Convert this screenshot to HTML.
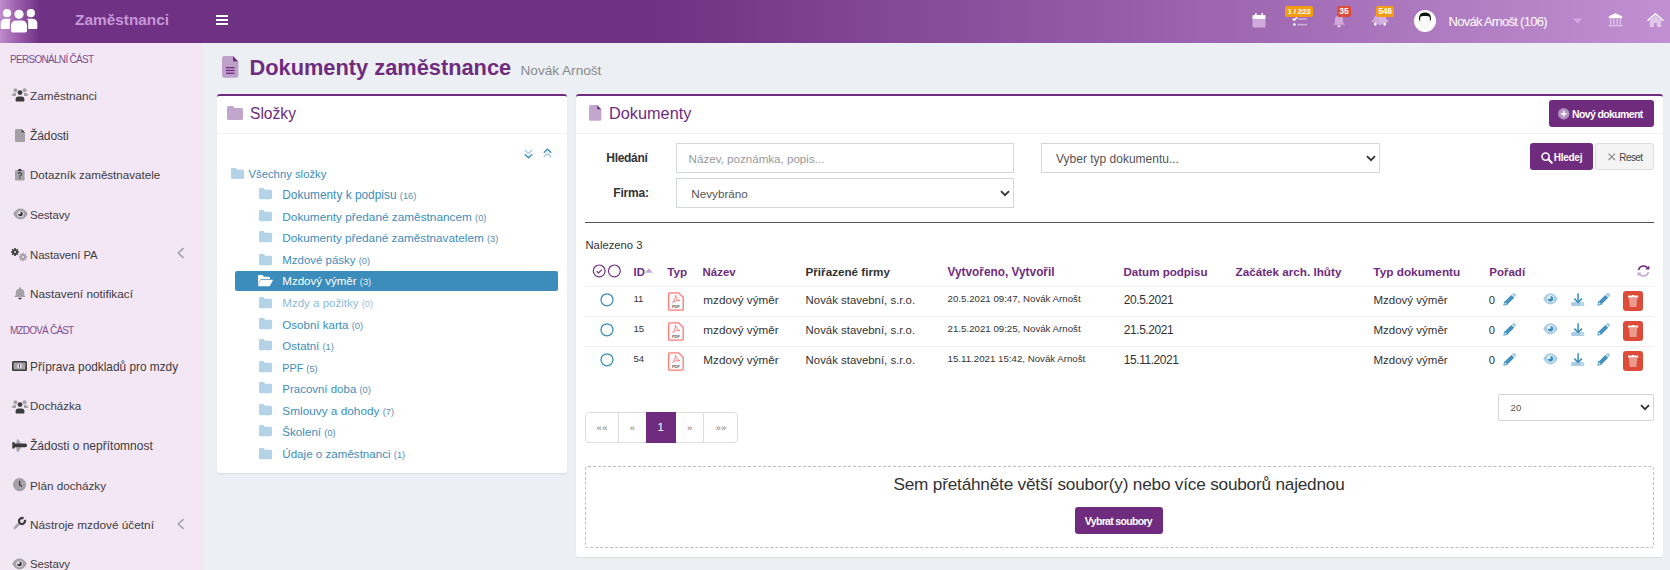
<!DOCTYPE html>
<html><head><meta charset="utf-8">
<style>
*{box-sizing:border-box;margin:0;padding:0}
html,body{width:1670px;height:570px;overflow:hidden}
body{position:relative;background:#ecf0f5;font-family:"Liberation Sans",sans-serif;color:#333}
.a{position:absolute;white-space:nowrap}
.t{position:absolute;white-space:nowrap;line-height:1}
svg{position:absolute;overflow:visible}
#hdr{position:absolute;left:0;top:0;width:1670px;height:43px;background:linear-gradient(to right,#6f3183 0,#6f3183 650px,#c190d2 1670px)}
#logo{position:absolute;left:0;top:0;width:52px;height:43px;background:linear-gradient(to right,#c08dcc 0,#9a5cab 18px,#6f3183 40px)}
#side{position:absolute;left:0;top:43px;width:203px;height:527px;background:#f3e6f5}
.si{color:#3d3d3d;font-size:12px}
.sh{color:#7b4f8c;font-size:10px}
.panel{position:absolute;background:#fff;border-top:2px solid #6f2c7f;border-radius:3px;box-shadow:0 1px 1px rgba(0,0,0,.08)}
.fl{color:#3c8dbc;font-size:12px}
.fc{font-size:10px;color:#5f7f99}
.th{font-weight:bold;color:#6f2c7f;font-size:12px}
.td{color:#333;font-size:12px}
</style></head>
<body>
<div id="hdr"></div>
<div id="logo"></div>
<div id="side"></div>

<!-- header -->
<svg style="left:0;top:9px" width="38" height="24" viewBox="0 0 38 24">
 <g fill="#fff">
  <circle cx="7" cy="4.2" r="4.1"/><circle cx="19" cy="5.3" r="4.6"/><circle cx="30.8" cy="4.2" r="4.1"/>
  <path d="M0.7 14.5a4.8 4.8 0 0 1 4.8-4.8h5.3a5.5 5.5 0 0 0-1 3.2v7.2H1.7a1 1 0 0 1-1-1z"/>
  <path d="M37.3 14.5a4.8 4.8 0 0 0-4.8-4.8h-5.3a5.5 5.5 0 0 1 1 3.2v7.2h8.1a1 1 0 0 0 1-1z"/>
  <path d="M11 16.5a5 5 0 0 1 5-5h6a5 5 0 0 1 5 5v5.2a1.8 1.8 0 0 1-1.8 1.8H12.8A1.8 1.8 0 0 1 11 21.7z"/>
 </g>
</svg>
<div class="t" style="left:75px;top:12px;font-size:15.4px;font-weight:bold;color:#c697d8">Zaměstnanci</div>
<div class="a" style="left:216px;top:15px;width:12px;height:2px;background:#fff"></div>
<div class="a" style="left:216px;top:19px;width:12px;height:2px;background:#fff"></div>
<div class="a" style="left:216px;top:23px;width:12px;height:2px;background:#fff"></div>

<!-- calendar -->
<svg style="left:1252px;top:12px" width="14" height="16" viewBox="0 0 14 16">
 <rect x="0.5" y="7" width="13" height="8.5" rx="1" fill="#cfa9dc"/>
 <path d="M0.5 7V4a1 1 0 0 1 1-1h11a1 1 0 0 1 1 1v3z" fill="#fff"/>
 <rect x="3" y="1" width="1.6" height="3" fill="#fff"/><rect x="9.4" y="1" width="1.6" height="3" fill="#fff"/>
</svg>
<!-- tasks -->
<svg style="left:1292px;top:16px" width="16" height="11" viewBox="0 0 16 11">
 <path d="M0.8 2.6l1.6 1.6L5 1.2" stroke="#fff" stroke-width="1.5" fill="none"/>
 <circle cx="2.4" cy="8.6" r="1.3" fill="#fff"/>
 <rect x="6" y="2.2" width="9" height="1.6" fill="#cfa9dc"/><rect x="5.5" y="7.8" width="9.5" height="1.6" fill="#cfa9dc"/>
</svg>
<div class="a" style="left:1285px;top:6px;width:28px;height:11px;background:#f39c12;border-radius:2px;color:#fff;font-size:8px;font-weight:bold;text-align:center;line-height:11.5px;letter-spacing:-0.2px">1 / 223</div>
<!-- bell -->
<svg style="left:1332px;top:14px" width="14" height="14" viewBox="0 0 14 14">
 <path d="M7 1.5a4 4 0 0 1 4 4v3l2 2.3H1l2-2.3v-3a4 4 0 0 1 4-4z" fill="#cfa9dc"/>
 <path d="M5.3 11.6h3.4a1.7 1.7 0 0 1-3.4 0z" fill="#fff"/>
</svg>
<div class="a" style="left:1337px;top:6px;width:14px;height:11px;background:#dd4b39;border-radius:2px;color:#fff;font-size:8.5px;font-weight:bold;text-align:center;line-height:11.5px">35</div>
<!-- bells -->
<svg style="left:1371px;top:14px" width="18" height="13" viewBox="0 0 18 13">
 <g transform="rotate(22 6 6)"><path d="M6 1.2a3.6 3.6 0 0 1 3.6 3.6v2.6l1.7 2.1H0.7L2.4 7.4V4.8A3.6 3.6 0 0 1 6 1.2z" fill="#cfa9dc"/><circle cx="6" cy="10.6" r="1.4" fill="#fff"/></g>
 <g transform="rotate(-22 12 6)"><path d="M12 1.2a3.6 3.6 0 0 1 3.6 3.6v2.6l1.7 2.1H6.7L8.4 7.4V4.8A3.6 3.6 0 0 1 12 1.2z" fill="#d5b3e0"/><circle cx="12" cy="10.6" r="1.4" fill="#fff"/></g>
</svg>
<div class="a" style="left:1376px;top:6px;width:18px;height:11px;background:#f39c12;border-radius:2px;color:#fff;font-size:8.5px;font-weight:bold;text-align:center;line-height:11.5px;letter-spacing:-0.2px">546</div>
<!-- avatar -->
<svg style="left:1414px;top:10px" width="22" height="22" viewBox="0 0 22 22">
 <circle cx="11" cy="11" r="11" fill="#fff"/>
 <path d="M5.2 10.8C4.6 7 5.2 2.6 11 2.6s6.4 4.4 5.8 8.2l-.9-.2-.2-3.6C15 6.4 13.5 6 11 6S7 6.4 6.3 7l-.2 3.6z" fill="#111"/>
 <path d="M6.2 9.5c0 4.5 2 7.8 4.8 7.8s4.8-3.3 4.8-7.8" stroke="#ddd" stroke-width=".6" fill="none"/>
 <circle cx="8.8" cy="11" r=".6" fill="#ddd"/><circle cx="13.2" cy="11" r=".6" fill="#ddd"/>
</svg>
<div class="t" style="left:1448.5px;top:15px;font-size:13px;color:#fff;letter-spacing:-0.72px">Novák Arnošt (106)</div>
<svg style="left:1573px;top:18px" width="10" height="6" viewBox="0 0 10 6"><path d="M0 0.5h9.5L4.75 5.5z" fill="#d2aade"/></svg>
<!-- bank -->
<svg style="left:1608px;top:13px" width="15" height="14" viewBox="0 0 15 14">
 <path d="M7.5 0.2L14.2 3.3V5.2H0.8V3.3z" fill="#fff"/>
 <g fill="#d9bde3"><rect x="1.9" y="6" width="1.6" height="5.6"/><rect x="4.9" y="6" width="1.6" height="5.6"/><rect x="8.4" y="6" width="1.6" height="5.6"/><rect x="11.5" y="6" width="1.6" height="5.6"/>
 <rect x="0.6" y="11.8" width="13.8" height="1.8" rx=".4"/></g>
</svg>
<!-- home -->
<svg style="left:1647px;top:13px" width="17" height="15" viewBox="0 0 17 15">
 <path d="M1 7.2L8.5 0.8 16 7.2" stroke="#fff" stroke-width="1.5" fill="none" stroke-linecap="round" stroke-linejoin="round"/>
 <path d="M2.8 7.3L8.5 2.5l5.7 4.8V14H10V10H7v4H2.8z" fill="#e0c6e8"/>
</svg>

<!-- sidebar -->
<div class="t sh" style="left:10px;top:55px;font-size:10px;letter-spacing:-0.7px">PERSONÁLNÍ ČÁST</div>
<div class="t sh" style="left:10px;top:326px;font-size:10px;letter-spacing:-0.8px">MZDOVÁ ČÁST</div>
<div class="t si" style="left:30px;top:89.9px;font-size:11.7px">Zaměstnanci</div>
<div class="t si" style="left:30px;top:129.5px;letter-spacing:-0.1px">Žádosti</div>
<div class="t si" style="left:30px;top:169.2px;font-size:11.6px">Dotazník zaměstnavatele</div>
<div class="t si" style="left:30px;top:209.9px;font-size:11.4px;letter-spacing:-0.1px">Sestavy</div>
<div class="t si" style="left:30px;top:250.1px;font-size:11.4px;letter-spacing:-0.1px">Nastavení PA</div>
<div class="t si" style="left:30px;top:289.3px;font-size:11.8px">Nastavení notifikací</div>
<div class="t si" style="left:30px;top:362.1px;font-size:11.85px">Příprava podkladů pro mzdy</div>
<div class="t si" style="left:30px;top:401.4px;font-size:11.5px">Docházka</div>
<div class="t si" style="left:30px;top:440.3px;font-size:12px">Žádosti o nepřítomnost</div>
<div class="t si" style="left:30px;top:479.9px;font-size:11.7px">Plán docházky</div>
<div class="t si" style="left:30px;top:519.5px;font-size:11.8px">Nástroje mzdové účetní</div>
<div class="t si" style="left:30px;top:559.1px;font-size:11.4px;letter-spacing:-0.1px">Sestavy</div>
<svg style="left:177px;top:248px" width="7" height="10" viewBox="0 0 7 10"><path d="M6 0.6L1.2 5 6 9.4" stroke="#a9a0ad" stroke-width="1.6" fill="none" stroke-linecap="round" stroke-linejoin="round"/></svg>
<svg style="left:177px;top:519px" width="7" height="10" viewBox="0 0 7 10"><path d="M6 0.6L1.2 5 6 9.4" stroke="#a9a0ad" stroke-width="1.6" fill="none" stroke-linecap="round" stroke-linejoin="round"/></svg>
<!-- sidebar icons -->
<svg style="left:11.5px;top:88px" width="16" height="14" viewBox="0 0 16 14">
 <g fill="#a5a1a8"><circle cx="3.4" cy="2.2" r="2"/><circle cx="12.6" cy="2.2" r="2"/><path d="M0 7.5a2.5 2.5 0 0 1 2.5-2.5h2a3 3 0 0 0-.5 2v1H0z"/><path d="M16 7.5a2.5 2.5 0 0 0-2.5-2.5h-2a3 3 0 0 1 .5 2v1h4z"/></g>
 <g fill="#3b3b3b"><circle cx="8" cy="4.6" r="2.4"/><path d="M3.6 11.5a3 3 0 0 1 3-3h2.8a3 3 0 0 1 3 3v1.2a.8.8 0 0 1-.8.8H4.4a.8.8 0 0 1-.8-.8z"/></g>
</svg>
<svg style="left:14.8px;top:128.6px" width="10" height="13" viewBox="0 0 10 13">
 <path d="M1.2 0H6.5V3.5H10V11.8a1.2 1.2 0 0 1-1.2 1.2H1.2A1.2 1.2 0 0 1 0 11.8V1.2A1.2 1.2 0 0 1 1.2 0z" fill="#a5a1a8"/>
 <path d="M6.5 0L10 3.5H6.5z" fill="#3b3b3b"/>
</svg>
<svg style="left:14.8px;top:168px" width="10" height="13" viewBox="0 0 10 13">
 <rect x="0" y="2" width="9.6" height="10.4" rx="1.2" fill="#a5a1a8"/>
 <path d="M3 2.6a1.8 1.8 0 0 1 3.6 0V3H3z" fill="#3b3b3b"/>
 <path d="M3.4 6a1.5 1.5 0 1 1 2 1.4l-.6.5v.8" stroke="#3b3b3b" stroke-width="1.1" fill="none"/><circle cx="4.8" cy="10.3" r=".7" fill="#3b3b3b"/>
</svg>
<svg style="left:12.5px;top:208px" width="15" height="12" viewBox="0 0 15 12">
 <path d="M0.3 6C2 2.5 4.5 0.6 7.5 0.6S13 2.5 14.7 6C13 9.5 10.5 11.4 7.5 11.4S2 9.5 0.3 6z" fill="#a5a1a8"/>
 <circle cx="7.5" cy="6" r="3.2" fill="#f3e6f5"/><circle cx="7.5" cy="6" r="2.4" fill="#3b3b3b"/><path d="M7.5 3.6a2.4 2.4 0 0 0-2.4 2.4h2.4z" fill="#f3e6f5"/>
</svg>
<svg style="left:11px;top:247.5px" width="17" height="14" viewBox="0 0 17 14">
 <g transform="translate(4 4)"><circle r="2.6" fill="#3b3b3b"/><circle r="1" fill="#f3e6f5"/><g stroke="#3b3b3b" stroke-width="1.6"><path d="M0-4V4M-4 0H4M-2.8-2.8L2.8 2.8M-2.8 2.8L2.8-2.8"/></g><circle r="1" fill="#f3e6f5"/></g>
 <g transform="translate(12 9)"><circle r="2.8" fill="#a5a1a8"/><g stroke="#a5a1a8" stroke-width="1.6"><path d="M0-4.2V4.2M-4.2 0H4.2M-3-3L3 3M-3 3L3-3"/></g><circle r="1.1" fill="#f3e6f5"/></g>
</svg>
<svg style="left:13.5px;top:287px" width="12" height="13" viewBox="0 0 12 13">
 <path d="M6 0.3a1 1 0 0 1 1 1v.4a4 4 0 0 1 3.2 3.9v2.5L11.8 10H0.2L1.8 8.1V5.6A4 4 0 0 1 5 1.7v-.4a1 1 0 0 1 1-1z" fill="#a5a1a8"/>
 <path d="M4.3 10.8h3.4a1.7 1.7 0 0 1-3.4 0z" fill="#3b3b3b"/>
</svg>
<svg style="left:12px;top:361px" width="15" height="10" viewBox="0 0 15 10">
 <rect x="0" y="0" width="15" height="10" rx="1.5" fill="#3b3b3b"/><rect x="1.6" y="1.6" width="11.8" height="6.8" rx=".5" fill="#a5a1a8"/>
 <circle cx="7.5" cy="5" r="2.3" fill="#f3e6f5"/><rect x="7" y="3.5" width="1" height="3" fill="#3b3b3b"/>
</svg>
<svg style="left:11.5px;top:399.5px" width="16" height="14" viewBox="0 0 16 14">
 <g fill="#a5a1a8"><circle cx="3.4" cy="2.2" r="2"/><circle cx="12.6" cy="2.2" r="2"/><path d="M0 7.5a2.5 2.5 0 0 1 2.5-2.5h2a3 3 0 0 0-.5 2v1H0z"/><path d="M16 7.5a2.5 2.5 0 0 0-2.5-2.5h-2a3 3 0 0 1 .5 2v1h4z"/></g>
 <g fill="#3b3b3b"><circle cx="8" cy="4.6" r="2.4"/><path d="M3.6 11.5a3 3 0 0 1 3-3h2.8a3 3 0 0 1 3 3v1.2a.8.8 0 0 1-.8.8H4.4a.8.8 0 0 1-.8-.8z"/></g>
</svg>
<svg style="left:11.8px;top:438.5px" width="16" height="14" viewBox="0 0 16 14">
 <path d="M4.2 4.8L5 0.4Q5.6 0 6.3 0.4L9.4 4.8z M4.2 8.2L5 12.8Q5.6 13.2 6.3 12.8L9.4 8.2z" fill="#a5a1a8"/>
 <path d="M0.3 3.3H2.7V4.6H13.2Q15.1 4.6 15.1 6.4Q15.1 8.2 13.2 8.2H2.7V9.6H0.3z" fill="#3b3b3b"/>
</svg>
<svg style="left:12.9px;top:478.4px" width="14" height="14" viewBox="0 0 14 14">
 <circle cx="6.6" cy="6.6" r="6.6" fill="#a5a1a8"/><path d="M6.6 2.8v4l2.5 1.6" stroke="#3b3b3b" stroke-width="1.2" fill="none"/>
</svg>
<svg style="left:12.9px;top:517.4px" width="14" height="14" viewBox="0 0 14 14">
 <path d="M1.6 11.2L6.2 6.6" stroke="#a5a1a8" stroke-width="2.6" stroke-linecap="round"/><circle cx="1.7" cy="11.1" r=".55" fill="#f3e6f5"/>
 <circle cx="9" cy="4" r="3" stroke="#3b3b3b" stroke-width="2.3" fill="none" stroke-dasharray="16.4 2.45" transform="rotate(-22 9 4)"/>
</svg>
<svg style="left:12.4px;top:558.3px" width="15" height="12" viewBox="0 0 15 12">
 <path d="M0.3 6C2 2.5 4.5 0.6 7.5 0.6S13 2.5 14.7 6C13 9.5 10.5 11.4 7.5 11.4S2 9.5 0.3 6z" fill="#a5a1a8"/>
 <circle cx="7.5" cy="6" r="3.2" fill="#f3e6f5"/><circle cx="7.5" cy="6" r="2.4" fill="#3b3b3b"/><path d="M7.5 3.6a2.4 2.4 0 0 0-2.4 2.4h2.4z" fill="#f3e6f5"/>
</svg>

<!-- title -->
<svg style="left:222px;top:55.8px" width="17" height="22" viewBox="0 0 17 22">
 <path d="M2.2 0H11V5.5H16.4V19.6A2.2 2.2 0 0 1 14.2 21.8H2.2A2.2 2.2 0 0 1 0 19.6V2.2A2.2 2.2 0 0 1 2.2 0z" fill="#bfa0c8"/>
 <path d="M11 0L16.4 5.5H11z" fill="#6f2c7f"/>
 <g fill="#6f2c7f"><rect x="4" y="11" width="8.5" height="1.3"/><rect x="4" y="13.8" width="8.5" height="1.3"/><rect x="4" y="16.6" width="8.5" height="1.3"/></g>
</svg>
<div class="t" style="left:249.5px;top:56.5px;font-size:21.8px;font-weight:bold;color:#6f2c7f">Dokumenty zaměstnance</div>
<div class="t" style="left:520.5px;top:63.5px;font-size:13.6px;color:#8a8a8a">Novák Arnošt</div>

<!-- panels -->
<div class="panel" style="left:217px;top:94px;width:350px;height:379px"></div>
<div class="panel" style="left:576px;top:94px;width:1087px;height:463px"></div>
<div class="a" style="left:217px;top:133px;width:350px;height:1px;background:#f2f2f2"></div>
<div class="a" style="left:576px;top:133px;width:1087px;height:1px;background:#f2f2f2"></div>

<!-- slozky header -->
<svg style="left:227.3px;top:105.8px" width="16" height="14" viewBox="0 0 16 14"><path d="M1.5 0H6L7.8 2H14.5A1.5 1.5 0 0 1 16 3.5V12.4A1.5 1.5 0 0 1 14.5 13.9H1.5A1.5 1.5 0 0 1 0 12.4V1.5A1.5 1.5 0 0 1 1.5 0z" fill="#c3a6cb"/></svg>
<div class="t" style="left:250px;top:105.6px;font-size:15.6px;color:#6f2c7f">Složky</div>
<svg style="left:524px;top:148.5px" width="9" height="10" viewBox="0 0 9 10"><path d="M0.8 1L4.5 4.6 8.2 1" stroke="#a9cde3" stroke-width="1.4" fill="none"/><path d="M0.8 5.2L4.5 8.8 8.2 5.2" stroke="#3c8dbc" stroke-width="1.4" fill="none"/></svg>
<svg style="left:543px;top:148px" width="9" height="10" viewBox="0 0 9 10"><path d="M0.8 4.8L4.5 1.2 8.2 4.8" stroke="#3c8dbc" stroke-width="1.4" fill="none"/><path d="M0.8 9L4.5 5.4 8.2 9" stroke="#a9cde3" stroke-width="1.4" fill="none"/></svg>
<!-- tree -->
<svg style="left:231.3px;top:167.8px" width="13" height="11" viewBox="0 0 13 11"><path d="M1.2 0H4.6L6 1.6H11.8A1.2 1.2 0 0 1 13 2.8V9.8A1.2 1.2 0 0 1 11.8 11H1.2A1.2 1.2 0 0 1 0 9.8V1.2A1.2 1.2 0 0 1 1.2 0z" fill="#b5d3e7"/></svg>
<div class="t fl" style="left:248.5px;top:169px;font-size:11.3px">Všechny složky</div>
<div class="a" style="left:234.7px;top:271.2px;width:323.5px;height:20.3px;background:#3c8dbc;border-radius:2px"></div>
<svg style="left:258.7px;top:187.9px" width="13" height="11.3" viewBox="0 0 13 11" preserveAspectRatio="none"><path d="M1.2 0H4.6L6 1.6H11.8A1.2 1.2 0 0 1 13 2.8V9.8A1.2 1.2 0 0 1 11.8 11H1.2A1.2 1.2 0 0 1 0 9.8V1.2A1.2 1.2 0 0 1 1.2 0z" fill="#b5d3e7"/></svg>
<div class="t fl" style="left:282.3px;top:190.04px;font-size:11.88px;">Dokumenty k podpisu <span style="font-size:9.3px;color:#5a8bb0">(16)</span></div>
<svg style="left:258.7px;top:210.0px" width="13" height="11.3" viewBox="0 0 13 11" preserveAspectRatio="none"><path d="M1.2 0H4.6L6 1.6H11.8A1.2 1.2 0 0 1 13 2.8V9.8A1.2 1.2 0 0 1 11.8 11H1.2A1.2 1.2 0 0 1 0 9.8V1.2A1.2 1.2 0 0 1 1.2 0z" fill="#b5d3e7"/></svg>
<div class="t fl" style="left:282.3px;top:212.01px;font-size:11.8px;">Dokumenty předané zaměstnancem <span style="font-size:9.3px;color:#5a8bb0">(0)</span></div>
<svg style="left:258.7px;top:231.0px" width="13" height="11.3" viewBox="0 0 13 11" preserveAspectRatio="none"><path d="M1.2 0H4.6L6 1.6H11.8A1.2 1.2 0 0 1 13 2.8V9.8A1.2 1.2 0 0 1 11.8 11H1.2A1.2 1.2 0 0 1 0 9.8V1.2A1.2 1.2 0 0 1 1.2 0z" fill="#b5d3e7"/></svg>
<div class="t fl" style="left:282.3px;top:231.54px;font-size:11.77px;">Dokumenty předané zaměstnavatelem <span style="font-size:9.3px;color:#5a8bb0">(3)</span></div>
<svg style="left:258.7px;top:253.7px" width="13" height="11.3" viewBox="0 0 13 11" preserveAspectRatio="none"><path d="M1.2 0H4.6L6 1.6H11.8A1.2 1.2 0 0 1 13 2.8V9.8A1.2 1.2 0 0 1 11.8 11H1.2A1.2 1.2 0 0 1 0 9.8V1.2A1.2 1.2 0 0 1 1.2 0z" fill="#b5d3e7"/></svg>
<div class="t fl" style="left:282.3px;top:255.0px;font-size:11.46px;">Mzdové pásky <span style="font-size:9.3px;color:#5a8bb0">(0)</span></div>
<svg style="left:258px;top:274.5px" width="15" height="11.3" viewBox="0 0 15 11" preserveAspectRatio="none"><path d="M0 9.8V1.2A1.2 1.2 0 0 1 1.2 0H4.6L6 1.6H10.8A1.2 1.2 0 0 1 12 2.8V4H3.6A1.4 1.4 0 0 0 2.3 4.8z" fill="#fff"/><path d="M2.6 5.2A1 1 0 0 1 3.5 4.6H14.2A.6.6 0 0 1 14.7 5.5L12 10.4A1 1 0 0 1 11.1 11H0.6A.5.5 0 0 1 .2 10.3z" fill="#fff"/></svg>
<div class="t fl" style="left:282.3px;top:276.23px;font-size:11.54px;color:#fff;">Mzdový výměr <span style="font-size:9.3px;color:#e6f0f7">(3)</span></div>
<svg style="left:258.7px;top:296.7px" width="13" height="11.3" viewBox="0 0 13 11" preserveAspectRatio="none"><path d="M1.2 0H4.6L6 1.6H11.8A1.2 1.2 0 0 1 13 2.8V9.8A1.2 1.2 0 0 1 11.8 11H1.2A1.2 1.2 0 0 1 0 9.8V1.2A1.2 1.2 0 0 1 1.2 0z" fill="#b5d3e7"/></svg>
<div class="t fl" style="left:282.3px;top:298.43px;font-size:11.54px;color:#8dbad8;">Mzdy a požitky <span style="font-size:9.3px;color:#9bbdd6">(0)</span></div>
<svg style="left:258.7px;top:318.0px" width="13" height="11.3" viewBox="0 0 13 11" preserveAspectRatio="none"><path d="M1.2 0H4.6L6 1.6H11.8A1.2 1.2 0 0 1 13 2.8V9.8A1.2 1.2 0 0 1 11.8 11H1.2A1.2 1.2 0 0 1 0 9.8V1.2A1.2 1.2 0 0 1 1.2 0z" fill="#b5d3e7"/></svg>
<div class="t fl" style="left:282.3px;top:319.71px;font-size:11.57px;">Osobní karta <span style="font-size:9.3px;color:#5a8bb0">(0)</span></div>
<svg style="left:258.7px;top:339.2px" width="13" height="11.3" viewBox="0 0 13 11" preserveAspectRatio="none"><path d="M1.2 0H4.6L6 1.6H11.8A1.2 1.2 0 0 1 13 2.8V9.8A1.2 1.2 0 0 1 11.8 11H1.2A1.2 1.2 0 0 1 0 9.8V1.2A1.2 1.2 0 0 1 1.2 0z" fill="#b5d3e7"/></svg>
<div class="t fl" style="left:282.3px;top:341.49px;font-size:11.47px;">Ostatní <span style="font-size:9.3px;color:#5a8bb0">(1)</span></div>
<svg style="left:258.7px;top:361.1px" width="13" height="11.3" viewBox="0 0 13 11" preserveAspectRatio="none"><path d="M1.2 0H4.6L6 1.6H11.8A1.2 1.2 0 0 1 13 2.8V9.8A1.2 1.2 0 0 1 11.8 11H1.2A1.2 1.2 0 0 1 0 9.8V1.2A1.2 1.2 0 0 1 1.2 0z" fill="#b5d3e7"/></svg>
<div class="t fl" style="left:282.3px;top:362.56px;font-size:10.8px;">PPF <span style="font-size:9.3px;color:#5a8bb0">(5)</span></div>
<svg style="left:258.7px;top:382.1px" width="13" height="11.3" viewBox="0 0 13 11" preserveAspectRatio="none"><path d="M1.2 0H4.6L6 1.6H11.8A1.2 1.2 0 0 1 13 2.8V9.8A1.2 1.2 0 0 1 11.8 11H1.2A1.2 1.2 0 0 1 0 9.8V1.2A1.2 1.2 0 0 1 1.2 0z" fill="#b5d3e7"/></svg>
<div class="t fl" style="left:282.3px;top:384.38px;font-size:11.48px;">Pracovní doba <span style="font-size:9.3px;color:#5a8bb0">(0)</span></div>
<svg style="left:258.7px;top:404.3px" width="13" height="11.3" viewBox="0 0 13 11" preserveAspectRatio="none"><path d="M1.2 0H4.6L6 1.6H11.8A1.2 1.2 0 0 1 13 2.8V9.8A1.2 1.2 0 0 1 11.8 11H1.2A1.2 1.2 0 0 1 0 9.8V1.2A1.2 1.2 0 0 1 1.2 0z" fill="#b5d3e7"/></svg>
<div class="t fl" style="left:282.3px;top:405.79px;font-size:11.82px;">Smlouvy a dohody <span style="font-size:9.3px;color:#5a8bb0">(7)</span></div>
<svg style="left:258.7px;top:424.6px" width="13" height="11.3" viewBox="0 0 13 11" preserveAspectRatio="none"><path d="M1.2 0H4.6L6 1.6H11.8A1.2 1.2 0 0 1 13 2.8V9.8A1.2 1.2 0 0 1 11.8 11H1.2A1.2 1.2 0 0 1 0 9.8V1.2A1.2 1.2 0 0 1 1.2 0z" fill="#b5d3e7"/></svg>
<div class="t fl" style="left:282.3px;top:425.75px;font-size:11.64px;">Školení <span style="font-size:9.3px;color:#5a8bb0">(0)</span></div>
<svg style="left:258.7px;top:447.5px" width="13" height="11.3" viewBox="0 0 13 11" preserveAspectRatio="none"><path d="M1.2 0H4.6L6 1.6H11.8A1.2 1.2 0 0 1 13 2.8V9.8A1.2 1.2 0 0 1 11.8 11H1.2A1.2 1.2 0 0 1 0 9.8V1.2A1.2 1.2 0 0 1 1.2 0z" fill="#b5d3e7"/></svg>
<div class="t fl" style="left:282.3px;top:448.18px;font-size:11.6px;">Údaje o zaměstnanci <span style="font-size:9.3px;color:#5a8bb0">(1)</span></div>
<!-- docs header -->
<svg style="left:588.8px;top:105px" width="13" height="16" viewBox="0 0 13 16"><path d="M1.6 0H8.2V4.6H12.4V14.2A1.6 1.6 0 0 1 10.8 15.8H1.6A1.6 1.6 0 0 1 0 14.2V1.6A1.6 1.6 0 0 1 1.6 0z" fill="#c3a6cb"/><path d="M8.2 0L12.4 4.6H8.2z" fill="#6f2c7f"/></svg>
<div class="t" style="left:609px;top:105.1px;font-size:16.3px;color:#6f2c7f">Dokumenty</div>
<div class="a" style="left:1549px;top:100px;width:105px;height:27px;background:#6f2c7f;border-radius:3px"></div>
<svg style="left:1558.3px;top:107.8px" width="12" height="12" viewBox="0 0 12 12"><circle cx="5.7" cy="5.7" r="5.7" fill="#b48fc1"/><path d="M5.7 2.8v5.8M2.8 5.7h5.8" stroke="#fff" stroke-width="1.6"/></svg>
<div class="t" style="left:1572px;top:109.4px;font-size:10.5px;font-weight:bold;color:#fff;letter-spacing:-0.62px">Nový dokument</div>

<!-- filters -->
<div class="t" style="left:606.3px;top:151.8px;font-size:12px;font-weight:bold;color:#333;letter-spacing:-0.3px">Hledání</div>
<div class="t" style="left:613.3px;top:186.8px;font-size:12px;font-weight:bold;color:#333;letter-spacing:-0.2px">Firma:</div>
<div class="a" style="left:676px;top:143px;width:338px;height:30px;border:1px solid #d2d6de;background:#fff"></div>
<div class="t" style="left:688.6px;top:152.6px;font-size:11.6px;color:#999">Název, poznámka, popis...</div>
<div class="a" style="left:676px;top:178px;width:338px;height:30px;border:1px solid #d2d6de;background:#fff"></div>
<div class="t" style="left:691.3px;top:187.7px;font-size:11.7px;color:#555">Nevybráno</div>
<svg style="left:1000px;top:190px" width="10" height="7" viewBox="0 0 10 7"><path d="M1 1.2L5 5.2 9 1.2" stroke="#333" stroke-width="1.8" fill="none"/></svg>
<div class="a" style="left:1040.7px;top:143px;width:339px;height:29.5px;border:1px solid #d2d6de;background:#fff"></div>
<div class="t" style="left:1056px;top:152.8px;font-size:12px;color:#555">Vyber typ dokumentu...</div>
<svg style="left:1366px;top:154.5px" width="10" height="7" viewBox="0 0 10 7"><path d="M1 1.2L5 5.2 9 1.2" stroke="#333" stroke-width="1.8" fill="none"/></svg>
<div class="a" style="left:1530px;top:143px;width:62.6px;height:26.6px;background:#6f2c7f;border-radius:3px"></div>
<svg style="left:1541.3px;top:151.5px" width="12" height="12" viewBox="0 0 12 12"><circle cx="4.6" cy="4.6" r="3.6" stroke="#fff" stroke-width="1.6" fill="none"/><path d="M7.3 7.3L10.8 10.8" stroke="#fff" stroke-width="2" stroke-linecap="round"/></svg>
<div class="t" style="left:1553.7px;top:152.6px;font-size:10px;font-weight:bold;color:#fff;letter-spacing:-0.25px">Hledej</div>
<div class="a" style="left:1595px;top:143px;width:58.7px;height:26.6px;background:#f4f4f4;border:1px solid #ddd;border-radius:3px"></div>
<svg style="left:1608.3px;top:152.5px" width="8" height="8" viewBox="0 0 8 8"><path d="M0.6 0.6L7 7M7 0.6L0.6 7" stroke="#888" stroke-width="1.1"/></svg>
<div class="t" style="left:1619.3px;top:152.6px;font-size:10px;color:#444;letter-spacing:-0.6px">Reset</div>
<div class="a" style="left:585px;top:222px;width:1069px;height:1px;background:#555"></div>
<div class="t" style="left:585.5px;top:239.5px;font-size:11.25px;color:#333">Nalezeno 3</div>

<!-- table header -->
<svg style="left:592px;top:264px" width="30" height="14" viewBox="0 0 30 14"><circle cx="7.2" cy="6.9" r="5.9" stroke="#6f2c7f" stroke-width="1.2" fill="none"/><path d="M4.6 7.3l1.9 1.7 3.3-3.4" stroke="#6f2c7f" stroke-width="1.2" fill="none"/><circle cx="22.4" cy="6.9" r="5.9" stroke="#6f2c7f" stroke-width="1.2" fill="none"/></svg>
<div class="t" style="left:633.5px;top:267.23px;font-size:11.3px;font-weight:bold;color:#6f2c7f">ID</div>
<div class="t" style="left:667.3px;top:266.1px;font-size:11.7px;font-weight:bold;color:#6f2c7f">Typ</div>
<div class="t" style="left:702.6px;top:267.11px;font-size:11.45px;font-weight:bold;color:#6f2c7f">Název</div>
<div class="t" style="left:805.5px;top:266.1px;font-size:11.7px;font-weight:bold;color:#333">Přiřazené firmy</div>
<div class="t" style="left:947.5px;top:266.77px;font-size:11.85px;font-weight:bold;color:#6f2c7f">Vytvořeno, Vytvořil</div>
<div class="t" style="left:1123.5px;top:267.02px;font-size:11.55px;font-weight:bold;color:#6f2c7f">Datum podpisu</div>
<div class="t" style="left:1235.5px;top:266.1px;font-size:11.7px;font-weight:bold;color:#6f2c7f">Začátek arch. lhůty</div>
<div class="t" style="left:1373.3px;top:266.81px;font-size:11.8px;font-weight:bold;color:#6f2c7f">Typ dokumentu</div>
<div class="t" style="left:1489.3px;top:267.07px;font-size:11.5px;font-weight:bold;color:#6f2c7f">Pořadí</div>
<svg style="left:645.3px;top:267.8px" width="8" height="5" viewBox="0 0 8 5"><path d="M0 4.8L3.9 0.2 7.8 4.8z" fill="#c3a6cb"/></svg>
<svg style="left:1636.5px;top:265px" width="13" height="12" viewBox="0 0 13 12"><path d="M1.6 5.2A5 5 0 0 1 10.6 3" stroke="#6f2c7f" stroke-width="1.5" fill="none"/><path d="M12.4 0.4V4.4H8.4z" fill="#6f2c7f"/><path d="M11.4 6.8A5 5 0 0 1 2.4 9" stroke="#c3a6cb" stroke-width="1.5" fill="none"/><path d="M0.6 11.6V7.6H4.6z" fill="#c3a6cb"/></svg>
<div class="a" style="left:585px;top:286px;width:1069px;height:1px;background:#f0f0f0"></div>
<div class="a" style="left:585px;top:316px;width:1069px;height:1px;background:#f0f0f0"></div>
<div class="a" style="left:585px;top:346px;width:1069px;height:1px;background:#f0f0f0"></div>
<svg style="left:600px;top:292.5px" width="14" height="14" viewBox="0 0 14 14"><circle cx="7" cy="6.8" r="6" stroke="#3c8dbc" stroke-width="1.3" fill="none"/></svg>
<div class="t" style="left:633.5px;top:294.07px;font-size:9.6px;color:#333">11</div>
<svg style="left:668px;top:291.8px" width="16" height="19" viewBox="0 0 16 19"><path d="M1.8 0.8H10.6L15.2 5.2V16.9A1.3 1.3 0 0 1 13.9 18.2H1.8A1.2 1.2 0 0 1 0.6 17V2A1.2 1.2 0 0 1 1.8 0.8z" fill="#f7fbfd" stroke="#ff7a72" stroke-width="1.3"/><path d="M7.6 3.4C7.4 5.6 6.6 8.6 4.4 10.9M7.6 3.4C8 5.8 9.6 8 11.8 8.6C10.2 8.4 7.6 8.6 6.2 9.6" stroke="#ff6a60" stroke-width=".8" fill="none"/><text x="7.8" y="15.6" font-size="4.2" font-family="Liberation Sans" fill="#666" text-anchor="middle" font-weight="bold" letter-spacing="-.3">PDF</text></svg>
<div class="t td" style="left:703.3px;top:294.1px;font-size:11.7px">mzdový výměr</div>
<div class="t td" style="left:805.6px;top:294.95px;font-size:11.4px">Novák stavební, s.r.o.</div>
<div class="t td" style="left:947.6px;top:293.59px;font-size:9.7px">20.5.2021 09:47, Novák Arnošt</div>
<div class="t td" style="left:1123.8px;top:294.34px;font-size:12px;letter-spacing:-0.45px">20.5.2021</div>
<div class="t td" style="left:1373.5px;top:294.97px;font-size:11.5px">Mzdový výměr</div>
<div class="t td" style="left:1488.8px;top:294.52px;font-size:11.2px">0</div>
<svg style="left:1502.6px;top:293.2px" width="14" height="13" viewBox="0 0 14 13"><g transform="translate(0.8 12.2) rotate(-45) scale(0.93)"><path d="M0 0L3.6-2.1V2.1z" fill="#fff" stroke="#3c8dbc" stroke-width=".9" stroke-linejoin="round"/><rect x="3.6" y="-2.1" width="10" height="4.2" fill="#3c8dbc"/><path d="M5 0H12.5" stroke="#7fb6d8" stroke-width=".6" stroke-dasharray="1 .8"/><path d="M14.2-2.1H16.2A1.3 1.3 0 0 1 17.5-0.8V0.8A1.3 1.3 0 0 1 16.2 2.1H14.2z" fill="#a8cde4"/></g></svg>
<svg style="left:1597.2px;top:293.2px" width="14" height="13" viewBox="0 0 14 13"><g transform="translate(0.8 12.2) rotate(-45) scale(0.93)"><path d="M0 0L3.6-2.1V2.1z" fill="#fff" stroke="#3c8dbc" stroke-width=".9" stroke-linejoin="round"/><rect x="3.6" y="-2.1" width="10" height="4.2" fill="#3c8dbc"/><path d="M5 0H12.5" stroke="#7fb6d8" stroke-width=".6" stroke-dasharray="1 .8"/><path d="M14.2-2.1H16.2A1.3 1.3 0 0 1 17.5-0.8V0.8A1.3 1.3 0 0 1 16.2 2.1H14.2z" fill="#a8cde4"/></g></svg>
<svg style="left:1543.3px;top:293.3px" width="15" height="12" viewBox="0 0 15 12"><path d="M0.3 5.8C2 2.3 4.5 0.2 7.5 0.2S13 2.3 14.7 5.8C13 9.3 10.5 11.4 7.5 11.4S2 9.3 0.3 5.8z" fill="#a8cde4"/><circle cx="7.5" cy="5.8" r="3.5" fill="#fff"/><circle cx="7.5" cy="5.8" r="2.8" fill="#3c8dbc"/><path d="M7.5 3A2.8 2.8 0 0 0 4.7 5.8H7.5z" fill="#fff"/></svg>
<svg style="left:1570.6px;top:292.6px" width="14" height="14" viewBox="0 0 14 14"><rect x="0.1" y="9.1" width="13.2" height="4" rx="1.6" fill="#a8cde4"/><path d="M7.1 0.2V9" stroke="#3c8dbc" stroke-width="1.5"/><path d="M3.3 5.6L7.1 9.4 10.9 5.6" stroke="#3c8dbc" stroke-width="1.5" fill="none"/><rect x="10.3" y="10.6" width="1.4" height="1" fill="#fff"/></svg>
<div class="a" style="left:1623px;top:291.1px;width:19.8px;height:19.5px;background:#dd4b39;border-radius:3px"></div>
<svg style="left:1627.8px;top:295px" width="11" height="12" viewBox="0 0 11 12"><rect x="0" y="0.6" width="10.2" height="2" fill="#fff"/><rect x="4" y="0" width="2.2" height="1" fill="#fff"/><path d="M0.9 2.6H9.3L8.5 11.4A.6.6 0 0 1 7.9 12H2.3A.6.6 0 0 1 1.7 11.4z" fill="#ec9990"/></svg>
<svg style="left:600px;top:322.5px" width="14" height="14" viewBox="0 0 14 14"><circle cx="7" cy="6.8" r="6" stroke="#3c8dbc" stroke-width="1.3" fill="none"/></svg>
<div class="t" style="left:633.5px;top:324.07px;font-size:9.6px;color:#333">15</div>
<svg style="left:668px;top:321.8px" width="16" height="19" viewBox="0 0 16 19"><path d="M1.8 0.8H10.6L15.2 5.2V16.9A1.3 1.3 0 0 1 13.9 18.2H1.8A1.2 1.2 0 0 1 0.6 17V2A1.2 1.2 0 0 1 1.8 0.8z" fill="#f7fbfd" stroke="#ff7a72" stroke-width="1.3"/><path d="M7.6 3.4C7.4 5.6 6.6 8.6 4.4 10.9M7.6 3.4C8 5.8 9.6 8 11.8 8.6C10.2 8.4 7.6 8.6 6.2 9.6" stroke="#ff6a60" stroke-width=".8" fill="none"/><text x="7.8" y="15.6" font-size="4.2" font-family="Liberation Sans" fill="#666" text-anchor="middle" font-weight="bold" letter-spacing="-.3">PDF</text></svg>
<div class="t td" style="left:703.3px;top:324.1px;font-size:11.7px">mzdový výměr</div>
<div class="t td" style="left:805.6px;top:324.95px;font-size:11.4px">Novák stavební, s.r.o.</div>
<div class="t td" style="left:947.6px;top:323.59px;font-size:9.7px">21.5.2021 09:25, Novák Arnošt</div>
<div class="t td" style="left:1123.8px;top:324.34px;font-size:12px;letter-spacing:-0.45px">21.5.2021</div>
<div class="t td" style="left:1373.5px;top:324.97px;font-size:11.5px">Mzdový výměr</div>
<div class="t td" style="left:1488.8px;top:324.52px;font-size:11.2px">0</div>
<svg style="left:1502.6px;top:323.2px" width="14" height="13" viewBox="0 0 14 13"><g transform="translate(0.8 12.2) rotate(-45) scale(0.93)"><path d="M0 0L3.6-2.1V2.1z" fill="#fff" stroke="#3c8dbc" stroke-width=".9" stroke-linejoin="round"/><rect x="3.6" y="-2.1" width="10" height="4.2" fill="#3c8dbc"/><path d="M5 0H12.5" stroke="#7fb6d8" stroke-width=".6" stroke-dasharray="1 .8"/><path d="M14.2-2.1H16.2A1.3 1.3 0 0 1 17.5-0.8V0.8A1.3 1.3 0 0 1 16.2 2.1H14.2z" fill="#a8cde4"/></g></svg>
<svg style="left:1597.2px;top:323.2px" width="14" height="13" viewBox="0 0 14 13"><g transform="translate(0.8 12.2) rotate(-45) scale(0.93)"><path d="M0 0L3.6-2.1V2.1z" fill="#fff" stroke="#3c8dbc" stroke-width=".9" stroke-linejoin="round"/><rect x="3.6" y="-2.1" width="10" height="4.2" fill="#3c8dbc"/><path d="M5 0H12.5" stroke="#7fb6d8" stroke-width=".6" stroke-dasharray="1 .8"/><path d="M14.2-2.1H16.2A1.3 1.3 0 0 1 17.5-0.8V0.8A1.3 1.3 0 0 1 16.2 2.1H14.2z" fill="#a8cde4"/></g></svg>
<svg style="left:1543.3px;top:323.3px" width="15" height="12" viewBox="0 0 15 12"><path d="M0.3 5.8C2 2.3 4.5 0.2 7.5 0.2S13 2.3 14.7 5.8C13 9.3 10.5 11.4 7.5 11.4S2 9.3 0.3 5.8z" fill="#a8cde4"/><circle cx="7.5" cy="5.8" r="3.5" fill="#fff"/><circle cx="7.5" cy="5.8" r="2.8" fill="#3c8dbc"/><path d="M7.5 3A2.8 2.8 0 0 0 4.7 5.8H7.5z" fill="#fff"/></svg>
<svg style="left:1570.6px;top:322.6px" width="14" height="14" viewBox="0 0 14 14"><rect x="0.1" y="9.1" width="13.2" height="4" rx="1.6" fill="#a8cde4"/><path d="M7.1 0.2V9" stroke="#3c8dbc" stroke-width="1.5"/><path d="M3.3 5.6L7.1 9.4 10.9 5.6" stroke="#3c8dbc" stroke-width="1.5" fill="none"/><rect x="10.3" y="10.6" width="1.4" height="1" fill="#fff"/></svg>
<div class="a" style="left:1623px;top:321.1px;width:19.8px;height:19.5px;background:#dd4b39;border-radius:3px"></div>
<svg style="left:1627.8px;top:325px" width="11" height="12" viewBox="0 0 11 12"><rect x="0" y="0.6" width="10.2" height="2" fill="#fff"/><rect x="4" y="0" width="2.2" height="1" fill="#fff"/><path d="M0.9 2.6H9.3L8.5 11.4A.6.6 0 0 1 7.9 12H2.3A.6.6 0 0 1 1.7 11.4z" fill="#ec9990"/></svg>
<svg style="left:600px;top:352.5px" width="14" height="14" viewBox="0 0 14 14"><circle cx="7" cy="6.8" r="6" stroke="#3c8dbc" stroke-width="1.3" fill="none"/></svg>
<div class="t" style="left:633.5px;top:354.07px;font-size:9.6px;color:#333">54</div>
<svg style="left:668px;top:351.8px" width="16" height="19" viewBox="0 0 16 19"><path d="M1.8 0.8H10.6L15.2 5.2V16.9A1.3 1.3 0 0 1 13.9 18.2H1.8A1.2 1.2 0 0 1 0.6 17V2A1.2 1.2 0 0 1 1.8 0.8z" fill="#f7fbfd" stroke="#ff7a72" stroke-width="1.3"/><path d="M7.6 3.4C7.4 5.6 6.6 8.6 4.4 10.9M7.6 3.4C8 5.8 9.6 8 11.8 8.6C10.2 8.4 7.6 8.6 6.2 9.6" stroke="#ff6a60" stroke-width=".8" fill="none"/><text x="7.8" y="15.6" font-size="4.2" font-family="Liberation Sans" fill="#666" text-anchor="middle" font-weight="bold" letter-spacing="-.3">PDF</text></svg>
<div class="t td" style="left:703.3px;top:354.1px;font-size:11.7px">Mzdový výměr</div>
<div class="t td" style="left:805.6px;top:354.95px;font-size:11.4px">Novák stavební, s.r.o.</div>
<div class="t td" style="left:947.6px;top:353.59px;font-size:9.7px">15.11.2021 15:42, Novák Arnošt</div>
<div class="t td" style="left:1123.8px;top:354.34px;font-size:12px;letter-spacing:-0.45px">15.11.2021</div>
<div class="t td" style="left:1373.5px;top:354.97px;font-size:11.5px">Mzdový výměr</div>
<div class="t td" style="left:1488.8px;top:354.52px;font-size:11.2px">0</div>
<svg style="left:1502.6px;top:353.2px" width="14" height="13" viewBox="0 0 14 13"><g transform="translate(0.8 12.2) rotate(-45) scale(0.93)"><path d="M0 0L3.6-2.1V2.1z" fill="#fff" stroke="#3c8dbc" stroke-width=".9" stroke-linejoin="round"/><rect x="3.6" y="-2.1" width="10" height="4.2" fill="#3c8dbc"/><path d="M5 0H12.5" stroke="#7fb6d8" stroke-width=".6" stroke-dasharray="1 .8"/><path d="M14.2-2.1H16.2A1.3 1.3 0 0 1 17.5-0.8V0.8A1.3 1.3 0 0 1 16.2 2.1H14.2z" fill="#a8cde4"/></g></svg>
<svg style="left:1597.2px;top:353.2px" width="14" height="13" viewBox="0 0 14 13"><g transform="translate(0.8 12.2) rotate(-45) scale(0.93)"><path d="M0 0L3.6-2.1V2.1z" fill="#fff" stroke="#3c8dbc" stroke-width=".9" stroke-linejoin="round"/><rect x="3.6" y="-2.1" width="10" height="4.2" fill="#3c8dbc"/><path d="M5 0H12.5" stroke="#7fb6d8" stroke-width=".6" stroke-dasharray="1 .8"/><path d="M14.2-2.1H16.2A1.3 1.3 0 0 1 17.5-0.8V0.8A1.3 1.3 0 0 1 16.2 2.1H14.2z" fill="#a8cde4"/></g></svg>
<svg style="left:1543.3px;top:353.3px" width="15" height="12" viewBox="0 0 15 12"><path d="M0.3 5.8C2 2.3 4.5 0.2 7.5 0.2S13 2.3 14.7 5.8C13 9.3 10.5 11.4 7.5 11.4S2 9.3 0.3 5.8z" fill="#a8cde4"/><circle cx="7.5" cy="5.8" r="3.5" fill="#fff"/><circle cx="7.5" cy="5.8" r="2.8" fill="#3c8dbc"/><path d="M7.5 3A2.8 2.8 0 0 0 4.7 5.8H7.5z" fill="#fff"/></svg>
<svg style="left:1570.6px;top:352.6px" width="14" height="14" viewBox="0 0 14 14"><rect x="0.1" y="9.1" width="13.2" height="4" rx="1.6" fill="#a8cde4"/><path d="M7.1 0.2V9" stroke="#3c8dbc" stroke-width="1.5"/><path d="M3.3 5.6L7.1 9.4 10.9 5.6" stroke="#3c8dbc" stroke-width="1.5" fill="none"/><rect x="10.3" y="10.6" width="1.4" height="1" fill="#fff"/></svg>
<div class="a" style="left:1623px;top:351.1px;width:19.8px;height:19.5px;background:#dd4b39;border-radius:3px"></div>
<svg style="left:1627.8px;top:355px" width="11" height="12" viewBox="0 0 11 12"><rect x="0" y="0.6" width="10.2" height="2" fill="#fff"/><rect x="4" y="0" width="2.2" height="1" fill="#fff"/><path d="M0.9 2.6H9.3L8.5 11.4A.6.6 0 0 1 7.9 12H2.3A.6.6 0 0 1 1.7 11.4z" fill="#ec9990"/></svg>
<!-- pagination -->
<div class="a" style="left:585px;top:412px;width:153px;height:30.5px;border:1px solid #ddd;border-radius:4px;background:#fff"></div>
<div class="a" style="left:618px;top:412px;width:1px;height:30.5px;background:#ddd"></div>
<div class="a" style="left:703px;top:412px;width:1px;height:30.5px;background:#ddd"></div>
<div class="a" style="left:646px;top:412px;width:30px;height:30.5px;background:#6f2c7f"></div>
<div class="t" style="left:596.6px;top:423.1px;font-size:9.5px;color:#777;letter-spacing:0.4px">««</div>
<div class="t" style="left:629.8px;top:423.1px;font-size:9.5px;color:#777">«</div>
<div class="t" style="left:657.6px;top:422px;font-size:11.5px;color:#fff">1</div>
<div class="t" style="left:687px;top:423.1px;font-size:9.5px;color:#777">»</div>
<div class="t" style="left:715.4px;top:423.1px;font-size:9.5px;color:#777;letter-spacing:0.4px">»»</div>
<!-- per page -->
<div class="a" style="left:1498px;top:394px;width:156px;height:27px;border:1px solid #d2d6de;border-radius:2px;background:#fff"></div>
<div class="t" style="left:1510.6px;top:403.3px;font-size:9.6px;color:#555">20</div>
<svg style="left:1640px;top:404px" width="10" height="7" viewBox="0 0 10 7"><path d="M1 1.2L5 5.2 9 1.2" stroke="#333" stroke-width="1.8" fill="none"/></svg>
<!-- dropzone -->
<div class="a" style="left:585px;top:466px;width:1069px;height:82px;border:1px dashed #bdbdbd;border-radius:3px"></div>
<div class="t" style="left:893.5px;top:475.6px;font-size:17.2px;color:#333;letter-spacing:-0.2px">Sem přetáhněte větší soubor(y) nebo více souborů najednou</div>
<div class="a" style="left:1075px;top:507px;width:88px;height:26.7px;background:#6f2c7f;border-radius:3px"></div>
<div class="t" style="left:1084.8px;top:515.7px;font-size:10.5px;font-weight:bold;color:#fff;letter-spacing:-0.67px">Vybrat soubory</div>

<!-- content placeholder -->
</body></html>
